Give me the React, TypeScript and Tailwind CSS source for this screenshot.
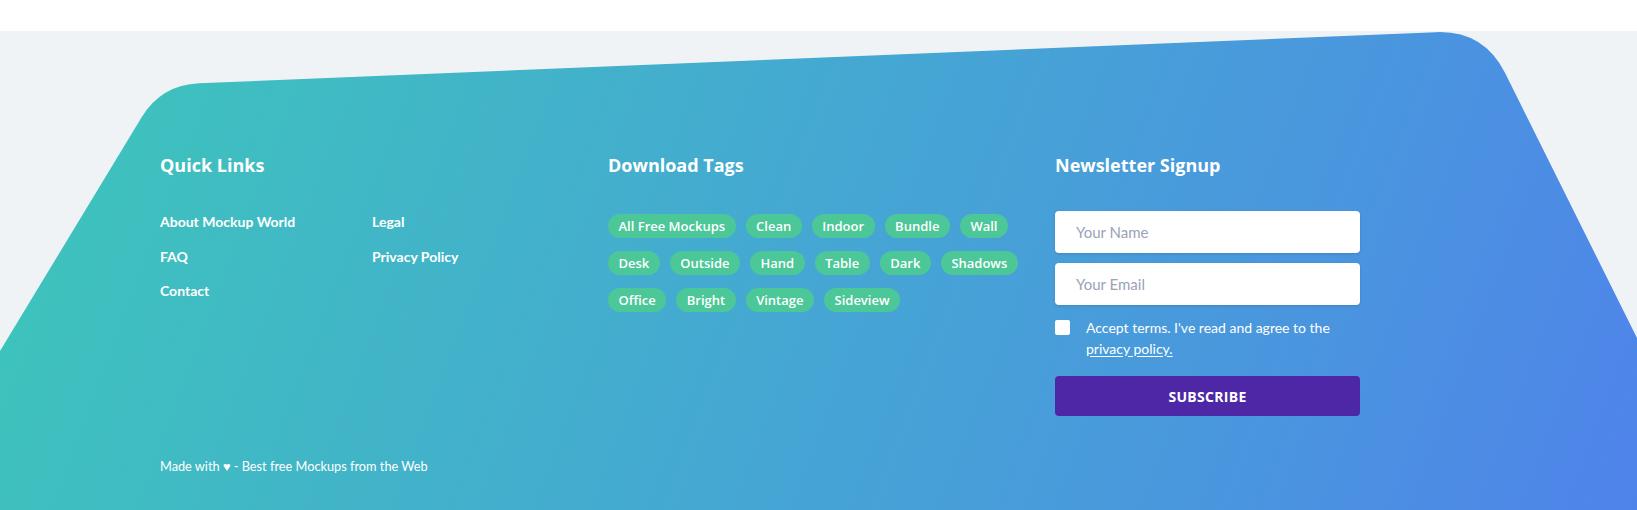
const quickLinks = [
	["About Mockup World", "FAQ", "Contact"],
	["Legal", "Privacy Policy"],
];

const tags = [
	"All Free Mockups",
	"Clean",
	"Indoor",
	"Bundle",
	"Wall",
	"Desk",
	"Outside",
	"Hand",
	"Table",
	"Dark",
	"Shadows",
	"Office",
	"Bright",
	"Vintage",
	"Sideview",
];

const FooterShape = () => {
	return (
		<svg
			className="absolute inset-0 h-full w-full"
			viewBox="0 0 1637 479"
			preserveAspectRatio="none"
		>
			<defs>
				<linearGradient id="footerGrad" gradientUnits="userSpaceOnUse" x1="0" y1="50" x2="1637" y2="670">
					<stop offset="0" stopColor="#3dc6ba" />
					<stop offset="0.47" stopColor="#45a7d3" />
					<stop offset="0.75" stopColor="#4a95df" />
					<stop offset="1" stopColor="#5080ec" />
				</linearGradient>
			</defs>
			<path
				d="M0 320 L141.5 86.5 Q161.3 54 199 52.35 L1435.7 1.15 Q1483.7 -0.85 1505.1 42.1 L1637 307 L1637 479 L0 479 Z"
				fill="url(#footerGrad)"
			/>
		</svg>
	);
};

const Heading = ({ children }: { children: React.ReactNode }) => {
	return (
		<h3 className="font-['Open_Sans',sans-serif] text-[18px] font-bold leading-[26px] text-white">{children}</h3>
	);
};

const App = () => {
	return (
		<div className="bg-white pt-[31px]">
			<footer className="relative h-[479px] overflow-hidden bg-[#eff3f6]">
				<FooterShape />
				<div className="relative pl-[160px] pt-[121px]">
					<div className="grid grid-cols-[448px_447px_305px]">
						<section>
							<Heading>Quick Links</Heading>
							<div className="mt-[34px] grid grid-cols-[212px_auto] font-['Lato',sans-serif] text-[14px] font-bold leading-[20px] text-white">
								{quickLinks.map((col, i) => (
									<ul key={i} className="flex flex-col gap-[14.5px]">
										{col.map((link) => (
											<li key={link}>
												<a href="#">{link}</a>
											</li>
										))}
									</ul>
								))}
							</div>
						</section>

						<section className="pr-[15px]">
							<Heading>Download Tags</Heading>
							<div className="mt-[36px] flex flex-wrap gap-x-[10px] gap-y-[13px]">
								{tags.map((tag) => (
									<a
										key={tag}
										href="#"
										className="h-[24px] rounded-full bg-[#4cc798] px-[10.5px] font-['Open_Sans',sans-serif] text-[13px] font-semibold leading-[24px] text-white"
									>
										{tag}
									</a>
								))}
							</div>
						</section>

						<section>
							<Heading>Newsletter Signup</Heading>
							<form className="mt-[33px] flex flex-col">
								<div className="flex flex-col gap-[10px]">
									<input
										type="text"
										placeholder="Your Name"
										className="h-[42px] w-full rounded-[4px] bg-white pl-[21px] font-['Lato',sans-serif] text-[15px] text-gray-700 shadow-[0_1px_3px_rgba(0,0,0,0.12)] outline-none placeholder:text-[#9aa2b6]"
									/>
									<input
										type="email"
										placeholder="Your Email"
										className="h-[42px] w-full rounded-[4px] bg-white pl-[21px] font-['Lato',sans-serif] text-[15px] text-gray-700 shadow-[0_1px_3px_rgba(0,0,0,0.12)] outline-none placeholder:text-[#9aa2b6]"
									/>
								</div>
								<label className="mt-[11.5px] flex gap-[16px]">
									<span className="mt-[3.5px] h-[15px] w-[15px] shrink-0 rounded-[2px] bg-white"></span>
									<span className="font-['Lato',sans-serif] text-[14px] leading-[21px] text-white">
										Accept terms. I've read and agree to the
										<br />
										<a href="#" className="underline underline-offset-2">
											privacy policy.
										</a>
									</span>
								</label>
								<button
									type="button"
									className="mt-[17.5px] h-[40px] w-full rounded-[4px] bg-[#4e27a7] font-['Open_Sans',sans-serif] text-[14px] font-bold uppercase tracking-[0.3px] text-white"
								>
									Subscribe
								</button>
							</form>
						</section>
					</div>

					<p className="mt-[41px] font-['Lato',sans-serif] text-[12.75px] leading-[18px] text-white">
						Made with ♥ - Best free Mockups from the Web
					</p>
				</div>
			</footer>
		</div>
	);
};
export default App;
